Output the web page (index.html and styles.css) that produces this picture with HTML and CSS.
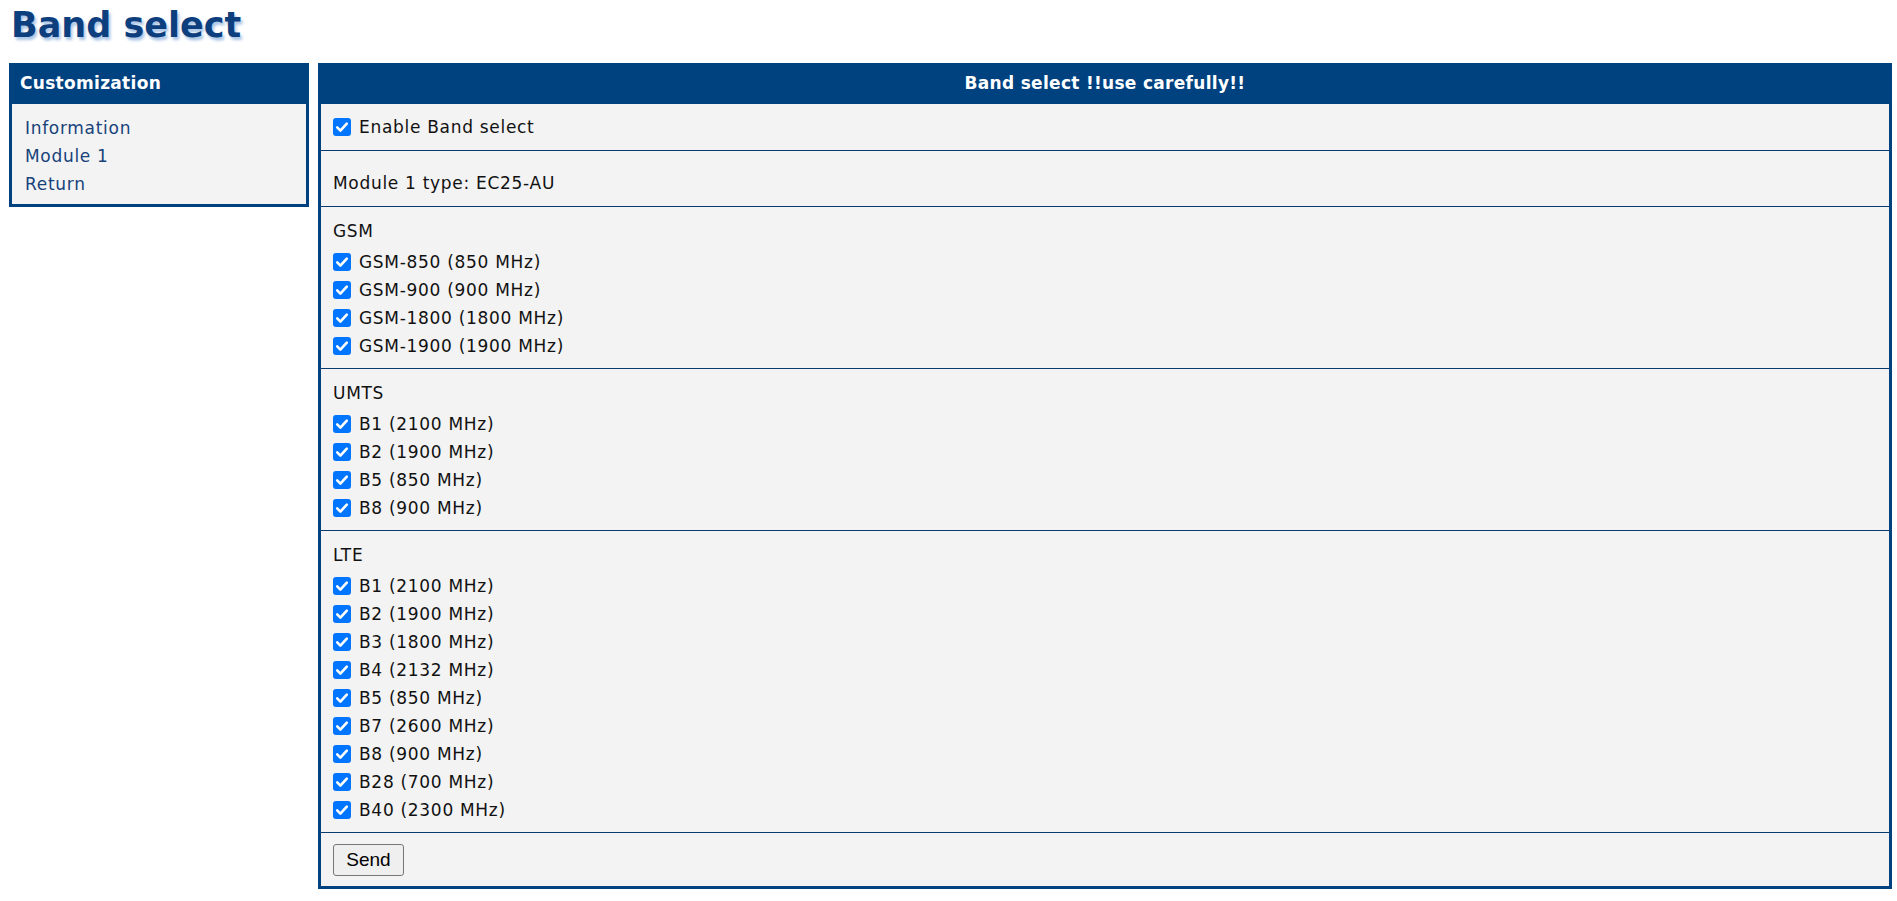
FILE: index.html
```html
<!DOCTYPE html>
<html>
<head>
<meta charset="utf-8">
<title>Band select</title>
<link rel="stylesheet" href="styles.css">
</head>
<body>
<h1 class="title">Band select</h1>
<div class="layout">
  <div class="menu">
    <div class="menu-head">Customization</div>
    <div class="menu-body">
      <a class="menu-link" href="#">Information</a>
      <a class="menu-link" href="#">Module 1</a>
      <a class="menu-link" href="#">Return</a>
    </div>
  </div>
  <div class="panel">
    <div class="panel-head">Band select !!use carefully!!</div>
    <div class="row row-enable">
      <label class="item"><input type="checkbox" class="cb" checked>Enable Band select</label>
    </div>
    <div class="row row-module">
      <div class="line">Module 1 type: EC25-AU</div>
    </div>
    <div class="row group">
      <div class="line group-title">GSM</div>
      <label class="item"><input type="checkbox" class="cb" checked>GSM-850 (850 MHz)</label>
      <label class="item"><input type="checkbox" class="cb" checked>GSM-900 (900 MHz)</label>
      <label class="item"><input type="checkbox" class="cb" checked>GSM-1800 (1800 MHz)</label>
      <label class="item"><input type="checkbox" class="cb" checked>GSM-1900 (1900 MHz)</label>
    </div>
    <div class="row group">
      <div class="line group-title">UMTS</div>
      <label class="item"><input type="checkbox" class="cb" checked>B1 (2100 MHz)</label>
      <label class="item"><input type="checkbox" class="cb" checked>B2 (1900 MHz)</label>
      <label class="item"><input type="checkbox" class="cb" checked>B5 (850 MHz)</label>
      <label class="item"><input type="checkbox" class="cb" checked>B8 (900 MHz)</label>
    </div>
    <div class="row group">
      <div class="line group-title">LTE</div>
      <label class="item"><input type="checkbox" class="cb" checked>B1 (2100 MHz)</label>
      <label class="item"><input type="checkbox" class="cb" checked>B2 (1900 MHz)</label>
      <label class="item"><input type="checkbox" class="cb" checked>B3 (1800 MHz)</label>
      <label class="item"><input type="checkbox" class="cb" checked>B4 (2132 MHz)</label>
      <label class="item"><input type="checkbox" class="cb" checked>B5 (850 MHz)</label>
      <label class="item"><input type="checkbox" class="cb" checked>B7 (2600 MHz)</label>
      <label class="item"><input type="checkbox" class="cb" checked>B8 (900 MHz)</label>
      <label class="item"><input type="checkbox" class="cb" checked>B28 (700 MHz)</label>
      <label class="item"><input type="checkbox" class="cb" checked>B40 (2300 MHz)</label>
    </div>
    <div class="row row-send">
      <button class="btn" type="button">Send</button>
    </div>
  </div>
</div>
</body>
</html>
```

FILE: styles.css
```css
html, body {
  margin: 0;
  padding: 0;
  background: #ffffff;
}

body {
  font-family: "DejaVu Sans", Verdana, sans-serif;
  font-size: 17px;
  letter-spacing: 0.7px;
  color: #111111;
}

.title {
  margin: 4px 0 0 11px;
  height: 42px;
  font-size: 35px;
  line-height: 42px;
  font-weight: bold;
  letter-spacing: 0;
  color: #0d3f7f;
  text-shadow: 2px 3px 3px #a9c4e6;
}

.layout {
  display: flex;
  align-items: flex-start;
  gap: 9px;
  margin-top: 17px;
  padding: 0 5px 0 9px;
}

.menu {
  width: 300px;
  flex: none;
  box-sizing: border-box;
  border: 3px solid #00427f;
  background: #f3f3f3;
}

.menu-head {
  height: 38px;
  background: #00427f;
  color: #ffffff;
  font-weight: bold;
  letter-spacing: 0.3px;
  line-height: 35px;
  padding-left: 8px;
}

.menu-body {
  display: flex;
  flex-direction: column;
  padding: 10px 0 6px 13px;
}

.menu-link {
  display: block;
  line-height: 28px;
  color: #17427a;
  text-decoration: none;
}

.panel {
  flex: 1;
  box-sizing: border-box;
  border: 3px solid #00427f;
  background: #f3f3f3;
}

.panel-head {
  height: 38px;
  background: #00427f;
  color: #ffffff;
  font-weight: bold;
  letter-spacing: 0.3px;
  text-align: center;
  line-height: 35px;
}

.row {
  display: flex;
  flex-direction: column;
  padding: 0 12px;
  border-top: 1px solid #0b3a6e;
}

.panel-head + .row {
  border-top: none;
}

.row-enable {
  padding-top: 9px;
  padding-bottom: 9px;
}

.row-module {
  padding-top: 18px;
  padding-bottom: 9px;
}

.group {
  padding-top: 10px;
  padding-bottom: 8px;
}

.line {
  line-height: 28px;
}

.group-title {
  margin-bottom: 3px;
}

.item {
  display: flex;
  align-items: center;
  height: 28px;
  line-height: 28px;
}

.cb {
  -webkit-appearance: none;
  appearance: none;
  width: 18px;
  height: 18px;
  margin: 0 8px 0 0;
  flex: none;
  border-radius: 3px;
  background-color: #ffffff;
  border: 1px solid #767676;
  box-sizing: border-box;
}

.cb:checked {
  border: none;
  background-color: #0075ff;
  background-image: url("data:image/svg+xml,%3Csvg xmlns='http://www.w3.org/2000/svg' viewBox='0 0 18 18'%3E%3Cpath d='M4.2 9.4 L7.4 12.6 L13.8 5.6' fill='none' stroke='%23ffffff' stroke-width='2.6' stroke-linecap='round' stroke-linejoin='round'/%3E%3C/svg%3E");
  background-size: 18px 18px;
  background-repeat: no-repeat;
}

.row-send {
  padding-top: 11px;
  padding-bottom: 10px;
  align-items: flex-start;
}

.btn {
  width: 71px;
  height: 32px;
  box-sizing: border-box;
  padding: 0;
  font-family: "Liberation Sans", Arial, sans-serif;
  font-size: 19px;
  letter-spacing: 0;
  color: #000000;
  background: #efefef;
  border: 1px solid #767676;
  border-radius: 3px;
}
```
